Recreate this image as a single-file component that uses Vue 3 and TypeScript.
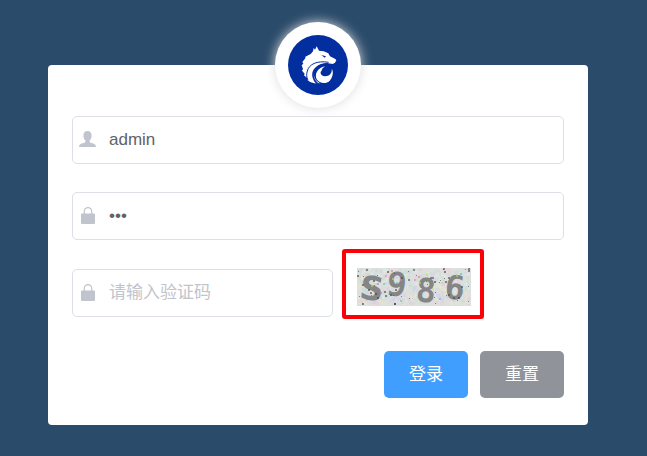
<script setup lang="ts">
import { ref } from 'vue'

interface Speck {
  x: number
  y: number
  size: number
  color: string
}

const username = ref('admin')
const password = ref('123')
const code = ref('')

const reset = () => {
  username.value = ''
  password.value = ''
  code.value = ''
}

let seed = 37
const random = () => {
  seed = (seed * 16807) % 2147483647
  return seed / 2147483647
}

const tints = ['#ebcbdc', '#c0e2d2', '#d4cdf0', '#e9e6c0', '#c6dee8', '#eedfe8', '#d0d8d4', '#dfeedf']
const darks = ['#34343c', '#4a3b42', '#33445d', '#4d304e', '#344d43']
const brights = ['#c4df42', '#49b8d2', '#e080cc', '#8a78e0', '#62c687', '#e87078']

const scatter = (count: number, size: number, colors: string[]): Speck[] =>
  Array.from({ length: count }, () => ({
    x: Math.floor(random() * (114 - size)),
    y: Math.floor(random() * (38 - size)),
    size,
    color: colors[Math.floor(random() * colors.length)],
  }))

const haze = scatter(520, 3, tints)
const noise = [...scatter(26, 1, darks), ...scatter(32, 2, darks), ...scatter(20, 2, brights)]
</script>

<template>
  <main class="page">
    <section class="card">
      <div class="avatar">
        <svg class="logo" viewBox="0 0 180 180" role="img" aria-label="Logo">
          <circle cx="90" cy="90" r="90" fill="#032ea0" />
          <path
            fill="#fff"
            d="M86 34 L93 47 L107 49 L121 55 L126 64 L142 72 L145 76 L141 83 L134 87 L117 84 C95 84 80 95 78 112 C76 128 84 138 96 145 C80 147 65 142 57 134 L58 130 L48 121 L50 116 L42 107 L45 102 L41 91 L46 86 L43 81 L52 70 L52 65 L68 57 L75 49 L77 39 L81 44 Z"
          />
          <path fill="#032ea0" d="M100 60 L114 64 L110 68 Z" />
          <path fill="none" stroke="#032ea0" stroke-width="3" d="M122 82 C86 76 63 88 58 108 C55 118 55 126 60 136" />
          <path fill="none" stroke="#032ea0" stroke-width="5" d="M118 87 C90 89 74 103 75 121 C76 133 83 142 92 149" />
          <path
            fill="#fff"
            d="M131 101 C138 109 134 131 122 140 C110 148 93 144 86 133 C79 117 88 99 111 94 C104 99 100 104 101 108 C95 110 98 120 106 123 C114 126 125 122 129 114 C131 109 132 106 131 101 Z"
          />
        </svg>
      </div>

      <form class="form" @submit.prevent>
        <div class="field">
          <label class="prefix" for="username" aria-label="用户名">
            <svg viewBox="0 0 17 17" aria-hidden="true">
              <path
                fill="currentColor"
                d="M8.5 0 C5.8 0 4.4 1.8 4.4 4.5 C4.4 6.5 5.1 8.5 6.4 9.6 V11 C5.9 12.1 1.6 12.2 .4 14.3 L0 16 H17 L16.6 14.3 C15.4 12.2 11.1 12.1 10.6 11 V9.6 C11.9 8.5 12.6 6.5 12.6 4.5 C12.6 1.8 11.2 0 8.5 0 Z"
              />
            </svg>
          </label>
          <input id="username" v-model="username" class="input" type="text" autocomplete="off" />
        </div>

        <div class="field">
          <label class="prefix" for="password" aria-label="密码">
            <svg viewBox="0 0 17 17" aria-hidden="true">
              <path
                fill="currentColor"
                d="M3 6.6 H4.7 V4.4 C4.7 1.8 6.5 0 9 0 S13.3 1.8 13.3 4.4 V6.6 H15 Q16 6.6 16 7.6 V16 Q16 17 15 17 H3 Q2 17 2 16 V7.6 Q2 6.6 3 6.6 Z M5.9 6.6 H12.1 V4.4 C12.1 2.4 10.8 1.2 9 1.2 S5.9 2.4 5.9 4.4 Z"
              />
            </svg>
          </label>
          <input id="password" v-model="password" class="input" type="password" autocomplete="off" />
        </div>

        <div class="code-row">
          <div class="field">
            <label class="prefix" for="code" aria-label="验证码">
              <svg viewBox="0 0 17 17" aria-hidden="true">
                <path
                  fill="currentColor"
                  d="M3 6.6 H4.7 V4.4 C4.7 1.8 6.5 0 9 0 S13.3 1.8 13.3 4.4 V6.6 H15 Q16 6.6 16 7.6 V16 Q16 17 15 17 H3 Q2 17 2 16 V7.6 Q2 6.6 3 6.6 Z M5.9 6.6 H12.1 V4.4 C12.1 2.4 10.8 1.2 9 1.2 S5.9 2.4 5.9 4.4 Z"
                />
              </svg>
            </label>
            <input id="code" v-model="code" class="input" type="text" placeholder="请输入验证码" autocomplete="off" />
          </div>
          <div class="captcha">
            <svg class="captcha-image" viewBox="0 0 114 38" role="img" aria-label="S986">
              <rect width="114" height="38" fill="#dcdfdd" />
              <rect v-for="(s, i) in haze" :key="`h${i}`" :x="s.x" :y="s.y" :width="s.size" :height="s.size" :fill="s.color" opacity="0.5" />
              <g class="glyphs">
                <text class="wide" x="3" y="32" transform="rotate(8 14 20)">S</text>
                <text x="30" y="28" transform="rotate(7 41 16)">9</text>
                <text x="59" y="34" transform="rotate(4 69 22)">8</text>
                <text x="88" y="31" transform="rotate(6 98 19)">6</text>
              </g>
              <rect
                v-for="(s, i) in noise"
                :key="`n${i}`"
                :x="s.x"
                :y="s.y"
                :width="s.size"
                :height="s.size"
                rx="1"
                :fill="s.color"
                opacity="0.75"
              />
            </svg>
            <span class="highlight"></span>
          </div>
        </div>

        <div class="actions">
          <button class="button primary" type="submit">登录</button>
          <button class="button info" type="button" @click="reset">重置</button>
        </div>
      </form>
    </section>
  </main>
</template>

<style>
body {
  margin: 0;
}
</style>

<style scoped>
.page {
  box-sizing: border-box;
  min-height: 100vh;
  padding: 65px 59px 31px 48px;
  background: #2b4b6b;
  font-family: "Liberation Sans", "Noto Sans CJK SC", sans-serif;
  font-size: 17px;
}

.card {
  position: relative;
  padding: 51px 24px 27px;
  border-radius: 4px;
  background: #fff;
}

.avatar {
  position: absolute;
  top: -43px;
  left: 50%;
  padding: 13px;
  border-radius: 50%;
  background: #fff;
  box-shadow: 0 0 12px #ddd;
  transform: translateX(-50%);
}

.logo {
  display: block;
  width: 60px;
  height: 60px;
}

.form {
  display: flex;
  flex-direction: column;
  gap: 28px;
}

.field {
  display: flex;
  box-sizing: border-box;
  min-width: 0;
  height: 48px;
  border: 1px solid #dcdfe6;
  border-radius: 5px;
  background: #fff;
}

.prefix {
  display: flex;
  align-items: center;
  padding: 0 12px 2px 6px;
  color: #c0c4cc;
}

.prefix svg {
  display: block;
  width: 17px;
  height: 17px;
}

.input {
  flex: 1;
  min-width: 0;
  padding: 0 16px 0 1px;
  border: 0;
  outline: 0;
  background: transparent;
  color: #606266;
  font: inherit;
}

.input::placeholder {
  color: #c0c4cc;
  opacity: 1;
}

.code-row {
  display: flex;
  gap: 24px;
  min-height: 49px;
}

.code-row .field {
  flex: 0 1 261px;
  align-self: flex-end;
}

.captcha {
  position: relative;
  align-self: flex-start;
}

.captcha-image {
  display: block;
  width: 114px;
  height: 38px;
  overflow: visible;
}

.glyphs text {
  fill: #858585;
  font-family: "DejaVu Sans Mono", monospace;
  font-size: 33px;
  font-weight: 700;
}

.glyphs .wide {
  font-family: "DejaVu Sans", sans-serif;
}

.highlight {
  position: absolute;
  inset: -19px -13px -13px -15px;
  border: 4px solid #fb0007;
  border-radius: 3px;
  pointer-events: none;
}

.actions {
  display: flex;
  justify-content: flex-end;
  gap: 12px;
  padding-top: 6px;
}

.button {
  height: 47px;
  padding: 0 25px 4px;
  border: 0;
  border-radius: 5px;
  color: #fff;
  font: inherit;
  cursor: pointer;
}

.primary {
  background: #409eff;
}

.info {
  background: #909399;
}
</style>
